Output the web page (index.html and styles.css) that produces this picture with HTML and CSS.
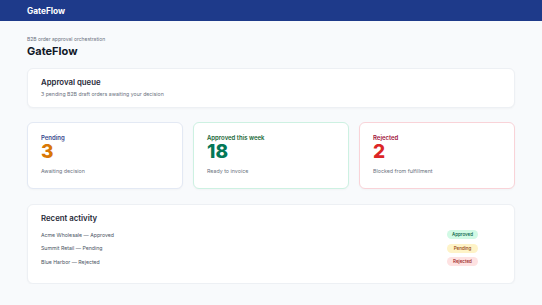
FILE: index.html
```html
<!DOCTYPE html>
<html lang="en">
<head>
  <meta charset="UTF-8">
  <meta name="viewport" content="width=device-width, initial-scale=1.0">
  <title>GateFlow</title>
  <link rel="stylesheet" href="styles.css">
</head>
<body>
  <header class="topbar">
    <span class="brand">GateFlow</span>
  </header>

  <main class="page">
    <p class="eyebrow">B2B order approval orchestration</p>
    <h1>GateFlow</h1>

    <section class="card queue">
      <h2>Approval queue</h2>
      <p class="muted">3 pending B2B draft orders awaiting your decision</p>
    </section>

    <div class="stats">
      <div class="card stat pending">
        <div class="stat-label">Pending</div>
        <div class="stat-value">3</div>
        <div class="stat-note">Awaiting decision</div>
      </div>
      <div class="card stat approved">
        <div class="stat-label">Approved this week</div>
        <div class="stat-value">18</div>
        <div class="stat-note">Ready to invoice</div>
      </div>
      <div class="card stat rejected">
        <div class="stat-label">Rejected</div>
        <div class="stat-value">2</div>
        <div class="stat-note">Blocked from fulfillment</div>
      </div>
    </div>

    <section class="card activity">
      <h2>Recent activity</h2>
      <ul class="activity-list">
        <li><span>Acme Wholesale — Approved</span><span class="badge badge-approved">Approved</span></li>
        <li><span>Summit Retail — Pending</span><span class="badge badge-pending">Pending</span></li>
        <li><span>Blue Harbor — Rejected</span><span class="badge badge-rejected">Rejected</span></li>
      </ul>
    </section>
  </main>
</body>
</html>
```

FILE: styles.css
```css
body {
  margin: 0;
  font-family: Inter, "Noto Sans", sans-serif;
  background-color: #f8fafc;
  color: #111827;
}

.topbar {
  height: 21px;
  background-color: #1e3a8a;
  padding: 0 27px;
  display: flex;
  align-items: center;
}

.brand {
  color: #ffffff;
  font-size: 8.3px;
  font-weight: 700;
}

.page {
  padding: 15px 27px 0;
}

.eyebrow {
  margin: 0;
  font-size: 5px;
  line-height: 6px;
  color: #6b7280;
}

h1 {
  margin: 3px 0 10px;
  font-size: 11px;
  line-height: 13px;
  font-weight: 700;
}

.card {
  background-color: #ffffff;
  border: 1px solid #edf0f4;
  border-radius: 6px;
  box-shadow: 0 1px 2px rgba(15, 23, 42, 0.03);
}

h2 {
  margin: 0;
  font-size: 7.8px;
  line-height: 10px;
  font-weight: 600;
  color: #1f2937;
}

.muted {
  margin: 3px 0 0;
  font-size: 5.2px;
  line-height: 8px;
  color: #6b7280;
}

.queue {
  padding: 8px 13px 9px;
}

.stats {
  margin-top: 14px;
  display: grid;
  grid-template-columns: repeat(3, 1fr);
  gap: 10px;
}

.stat {
  padding: 9.5px 13px 13.5px;
}

.stat-label {
  font-size: 6px;
  line-height: 9px;
  font-weight: 600;
}

.stat-value {
  margin-top: 0.5px;
  font-size: 19px;
  line-height: 20px;
  font-weight: 800;
}

.stat-note {
  margin-top: 5.5px;
  font-size: 5.3px;
  line-height: 7px;
  color: #6b7280;
}

.pending { border-color: #e3e9f4; }
.pending .stat-label { color: #3b4a8f; }
.pending .stat-value { color: #d97706; }

.approved { border-color: #cdf1e2; }
.approved .stat-label { color: #166534; }
.approved .stat-value { color: #047857; }

.rejected { border-color: #f9d3d8; }
.rejected .stat-label { color: #9f1239; }
.rejected .stat-value { color: #dc2626; }

.activity {
  margin-top: 15px;
  padding: 8px 36px 14px 13px;
}

.activity-list {
  list-style: none;
  margin: 5px 0 0;
  padding: 0;
}

.activity-list li {
  display: grid;
  grid-template-columns: 1fr 31px;
  align-items: center;
  height: 13.5px;
  font-size: 5.2px;
  color: #4b5563;
}

.badge {
  height: 9px;
  border-radius: 5px;
  font-size: 4.5px;
  line-height: 9px;
  text-align: center;
  font-weight: 500;
}

.badge-approved { background-color: #d1fae5; color: #065f46; }
.badge-pending { background-color: #fef3c7; color: #92400e; }
.badge-rejected { background-color: #fee2e2; color: #991b1b; }
```
